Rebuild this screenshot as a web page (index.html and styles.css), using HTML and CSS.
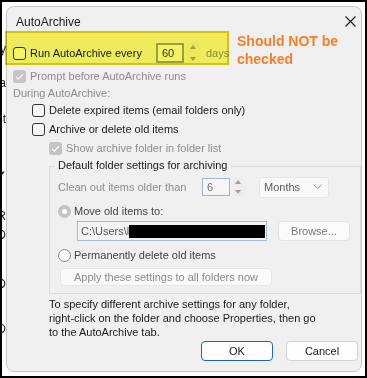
FILE: index.html
```html
<!DOCTYPE html>
<html lang="en">
<head>
  <meta charset="UTF-8">
  <meta name="viewport" content="width=device-width, initial-scale=1.0">
  <title>AutoArchive</title>
  <link rel="stylesheet" href="styles.css">
</head>
<body>

<div class="frame">
  <!-- bits of the window behind the dialog -->
  <div class="behind">
    <span class="peek" style="top:40px">y</span>
    <span class="peek" style="top:74px">a</span>
    <span class="peek" style="top:110px">St</span>
    <span class="peek" style="top:166px">✔</span>
    <span class="peek" style="top:207px">R</span>
    <span class="peek" style="top:226px">D</span>
    <span class="peek" style="top:275px">D</span>
    <span class="peek" style="top:320px">D</span>
  </div>

  <div class="dialog">
    <div class="titlebar">
      <span class="title">AutoArchive</span>
      <svg class="close" width="11" height="11" viewBox="0 0 11 11">
        <path d="M0.5 0.5 L10.5 10.5 M10.5 0.5 L0.5 10.5" stroke="#1b1b1b" stroke-width="1.1" fill="none"/>
      </svg>
    </div>

    <div class="content">
      <div class="row row-run">
        <span class="check"></span>
        <span class="label">Run AutoArchive every</span>
        <span class="spin spin-days">60</span>
        <span class="arrows">
          <span class="arr up"></span>
          <span class="arr down"></span>
        </span>
        <span class="label muted days">days</span>
      </div>

      <div class="row row-prompt">
        <span class="check checked disabled"><svg width="13" height="13" viewBox="0 0 13 13"><path d="M3 6.8 L5.4 9.2 L10 4.2" stroke="#fff" stroke-width="1.2" fill="none"/></svg></span>
        <span class="label muted">Prompt before AutoArchive runs</span>
      </div>

      <div class="row row-during">
        <span class="label muted">During AutoArchive:</span>
      </div>

      <div class="row row-delete indent">
        <span class="check"></span>
        <span class="label">Delete expired items (email folders only)</span>
      </div>

      <div class="row row-archive indent">
        <span class="check"></span>
        <span class="label">Archive or delete old items</span>
      </div>

      <div class="row row-show indent2">
        <span class="check checked disabled"><svg width="13" height="13" viewBox="0 0 13 13"><path d="M3 6.8 L5.4 9.2 L10 4.2" stroke="#fff" stroke-width="1.2" fill="none"/></svg></span>
        <span class="label muted">Show archive folder in folder list</span>
      </div>

      <div class="group">
        <span class="legend">Default folder settings for archiving</span>

        <div class="row row-clean">
          <span class="label muted clean-label">Clean out items older than</span>
          <span class="spin spin-months">6</span>
          <span class="arrows small">
            <span class="arr up"></span>
            <span class="arr down"></span>
          </span>
          <span class="combo">Months
            <svg width="9" height="6" viewBox="0 0 9 6"><path d="M0.5 0.5 L4.5 4.5 L8.5 0.5" stroke="#9a9a9a" stroke-width="1" fill="none"/></svg>
          </span>
        </div>

        <div class="row row-move">
          <span class="radio selected"></span>
          <span class="label dim">Move old items to:</span>
        </div>

        <div class="row row-path">
          <span class="path"><span class="path-text">C:\Users\l</span><span class="redact"></span></span>
          <span class="btn btn-browse">Browse...</span>
        </div>

        <div class="row row-perm">
          <span class="radio"></span>
          <span class="label dim">Permanently delete old items</span>
        </div>

        <div class="row row-apply">
          <span class="btn btn-apply">Apply these settings to all folders now</span>
        </div>
      </div>

      <p class="info">To specify different archive settings for any folder,<br>right-click on the folder and choose Properties, then go<br>to the AutoArchive tab.</p>

      <div class="actions">
        <span class="btn btn-ok">OK</span>
        <span class="btn btn-cancel">Cancel</span>
      </div>
    </div>
  </div>

  <!-- annotation drawn over the screenshot -->
  <div class="highlight"></div>
  <div class="note">Should NOT be<br>checked</div>
</div>

</body>
</html>
```

FILE: styles.css
```css
* {
  box-sizing: border-box;
}

body {
  margin: 0;
  background-color: #000;
  font-family: 'Liberation Sans', Arial, sans-serif;
  font-size: 11px;
  color: #1a1a1a;
}

.frame {
  position: relative;
  width: 367px;
  height: 378px;
  border: 2px solid #000;
  background-color: #fff;
  padding: 4px;
  overflow: hidden;
}

.behind {
  position: absolute;
  left: 0;
  top: 0;
  width: 4px;
  height: 100%;
  overflow: hidden;
}

.peek {
  position: absolute;
  right: 0;
  font-size: 12px;
  color: #222;
}

.dialog {
  width: 356px;
  height: 366px;
  border: 1px solid #c6c6c6;
  border-radius: 8px;
  background-color: #f0f0f0;
}

.titlebar {
  display: flex;
  justify-content: space-between;
  align-items: center;
  height: 24px;
  padding: 5px 5px 0 9px;
}

.title {
  font-size: 12px;
  color: #1a1a1a;
}

.content {
  padding-left: 6px;
}

.row {
  display: flex;
  align-items: center;
  height: 16px;
}

.label {
  white-space: nowrap;
}

.muted {
  color: #8d8d8d;
}

.dim {
  color: #444;
}

.check {
  flex: none;
  width: 13px;
  height: 13px;
  border: 1px solid #333;
  border-radius: 3px;
  background-color: #f8f8f8;
  margin-right: 4px;
}

.check.disabled {
  border: none;
  background-color: #c4c4c4;
}

.check svg {
  display: block;
}

.radio {
  flex: none;
  width: 13px;
  height: 13px;
  border: 1px solid #8a8a8a;
  border-radius: 50%;
  background-color: #fbfbfb;
  margin-right: 3px;
  position: relative;
}

.radio.selected {
  border: none;
  background-color: #c4c4c4;
}

.radio.selected::after {
  content: "";
  position: absolute;
  left: 4px;
  top: 4px;
  width: 5px;
  height: 5px;
  border-radius: 50%;
  background-color: #fff;
}

.row-run {
  height: 20px;
  margin-top: 12px;
}

.spin {
  height: 100%;
  display: flex;
  align-items: center;
  background-color: #f6f6f6;
  padding-left: 4px;
}

.spin-days {
  width: 28px;
  margin-left: 14px;
  border: 2px solid #99a3ad;
  color: #333;
}

.spin-months {
  width: 28px;
  border: 1px solid #9fb3d0;
  color: #6f6f6f;
}

.arrows {
  display: flex;
  flex-direction: column;
  justify-content: space-between;
  width: 13px;
  height: 100%;
  margin-left: 3px;
  padding: 2px 0;
  background-color: #ececec;
}

.arrows.small {
  width: 10px;
}

.arr {
  align-self: center;
  width: 0;
  height: 0;
  border-left: 3px solid transparent;
  border-right: 3px solid transparent;
}

.arr.up {
  border-bottom: 4px solid #a0a0a0;
}

.arr.down {
  border-top: 4px solid #a0a0a0;
}

.days {
  margin-left: 6px;
}

.row-prompt {
  margin-top: 5px;
}

.row-during {
  margin-top: 1px;
}

.row-delete {
  margin-top: 1px;
}

.row-archive {
  margin-top: 3px;
}

.row-show {
  margin-top: 3px;
}

.indent {
  padding-left: 19px;
}

.indent2 {
  padding-left: 36px;
}

.group {
  position: relative;
  width: 312px;
  margin-left: 36px;
  margin-top: 10px;
  border: 1px solid #dcdcdc;
  padding: 11px 0 7px 8px;
}

.legend {
  position: absolute;
  left: 5px;
  top: -8px;
  padding: 0 3px;
  background-color: #f0f0f0;
  color: #1a1a1a;
  white-space: nowrap;
}

.row-clean {
  height: 18px;
}

.clean-label {
  width: 144px;
}

.combo {
  display: flex;
  align-items: center;
  justify-content: space-between;
  width: 70px;
  height: 21px;
  margin-left: 16px;
  padding: 0 6px 0 4px;
  background-color: #f9f9f9;
  border: 1px solid #e6e6e6;
  border-radius: 3px;
  color: #5c5c5c;
}

.row-move {
  margin-top: 7px;
}

.row-path {
  height: 20px;
  margin-top: 2px;
  padding-left: 19px;
}

.path {
  display: flex;
  align-items: center;
  width: 190px;
  height: 100%;
  border: 1px solid #a8bad2;
  background-color: #f4f4f4;
  padding-left: 3px;
  color: #555;
  overflow: hidden;
}

.redact {
  flex: none;
  width: 136px;
  height: 13px;
  background-color: #000;
}

.btn {
  display: flex;
  align-items: center;
  justify-content: center;
  border-radius: 4px;
  white-space: nowrap;
}

.btn-browse {
  width: 72px;
  height: 20px;
  margin-left: 11px;
  background-color: #fbfbfb;
  border: 1px solid #e3e3e3;
  color: #777;
}

.row-perm {
  margin-top: 6px;
}

.row-apply {
  height: 18px;
  margin-top: 5px;
  padding-left: 2px;
}

.btn-apply {
  width: 212px;
  height: 18px;
  background-color: #fafafa;
  border: 1px solid #e6e6e6;
  color: #8a8a8a;
}

.info {
  margin: 3px 0 0 36px;
  line-height: 14px;
  color: #1a1a1a;
}

.actions {
  display: flex;
  justify-content: flex-end;
  gap: 13px;
  margin-top: 2px;
  padding-right: 3px;
}

.btn-ok,
.btn-cancel {
  width: 72px;
  height: 20px;
  background-color: #fdfdfd;
}

.btn-ok {
  border: 1px solid #1c66b8;
}

.btn-cancel {
  border: 1px solid #d2d2d2;
}

.highlight {
  position: absolute;
  left: 3px;
  top: 29px;
  width: 224px;
  height: 34px;
  background-color: #fdfb62;
  border: 2px solid #e4cd10;
  mix-blend-mode: multiply;
}

.note {
  position: absolute;
  left: 235px;
  top: 30px;
  font-size: 14px;
  font-weight: bold;
  line-height: 18px;
  color: #fb7d25;
}
```
